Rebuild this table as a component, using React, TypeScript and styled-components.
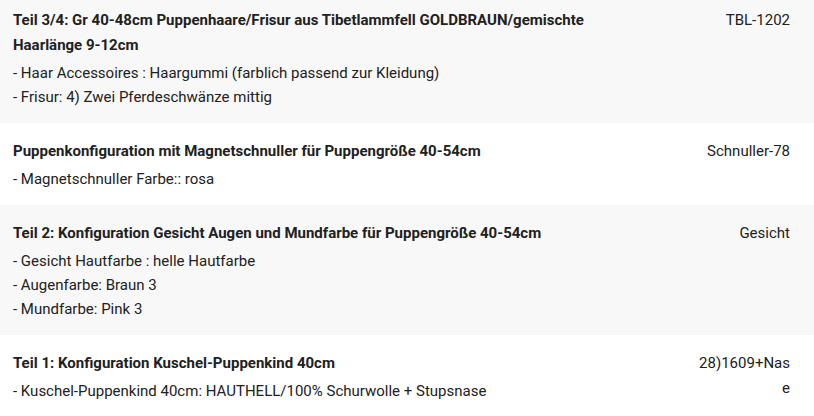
import { createGlobalStyle, styled } from 'styled-components';

const GlobalStyle = createGlobalStyle`
  html, body {
    margin: 0;
    padding: 0;
    background: #ffffff;
    font-family: Roboto, "Liberation Sans", Arial, sans-serif;
    color: #212121;
    overflow: hidden;
  }
`;

const ItemList = styled.div`
  display: flex;
  flex-direction: column;
  margin-top: -8px;
`;

const ItemRow = styled.div<{ $striped: boolean }>`
  background: ${props => props.$striped ? '#f8f8f8' : '#ffffff'};
  display: grid;
  grid-template-columns: 1fr 94px;
  column-gap: 50px;
  padding: 16px 24px 14px 13px;
`;

const ItemTitle = styled.div`
  font-size: 15px;
  font-weight: 700;
  line-height: 25px;
  margin-bottom: 3px;
`;

const ItemOption = styled.div`
  font-size: 15px;
  line-height: 24px;
`;

const ItemSku = styled.div`
  font-size: 15px;
  line-height: 25px;
  text-align: right;
  word-break: break-all;
`;

const items = [
  {
    id: 1,
    title: 'Teil 3/4: Gr 40-48cm Puppenhaare/Frisur aus Tibetlammfell GOLDBRAUN/gemischte Haarlänge 9-12cm',
    options: [
      '- Haar Accessoires : Haargummi (farblich passend zur Kleidung)',
      '- Frisur: 4) Zwei Pferdeschwänze mittig',
    ],
    sku: 'TBL-1202',
  },
  {
    id: 2,
    title: 'Puppenkonfiguration mit Magnetschnuller für Puppengröße 40-54cm',
    options: ['- Magnetschnuller Farbe:: rosa'],
    sku: 'Schnuller-78',
  },
  {
    id: 3,
    title: 'Teil 2: Konfiguration Gesicht Augen und Mundfarbe für Puppengröße 40-54cm',
    options: [
      '- Gesicht Hautfarbe : helle Hautfarbe',
      '- Augenfarbe: Braun 3',
      '- Mundfarbe: Pink 3',
    ],
    sku: 'Gesicht',
  },
  {
    id: 4,
    title: 'Teil 1: Konfiguration Kuschel-Puppenkind 40cm',
    options: ['- Kuschel-Puppenkind 40cm: HAUTHELL/100% Schurwolle + Stupsnase'],
    sku: '28)1609+Nase',
  },
];

export default function App() {
  return (
    <>
      <GlobalStyle />
      <ItemList>
        {items.map((item, i) => (
          <ItemRow key={item.id} $striped={i % 2 === 0}>
            <div>
              <ItemTitle>{item.title}</ItemTitle>
              {item.options.map((opt) => (
                <ItemOption key={opt}>{opt}</ItemOption>
              ))}
            </div>
            <ItemSku>{item.sku}</ItemSku>
          </ItemRow>
        ))}
      </ItemList>
    </>
  );
}
